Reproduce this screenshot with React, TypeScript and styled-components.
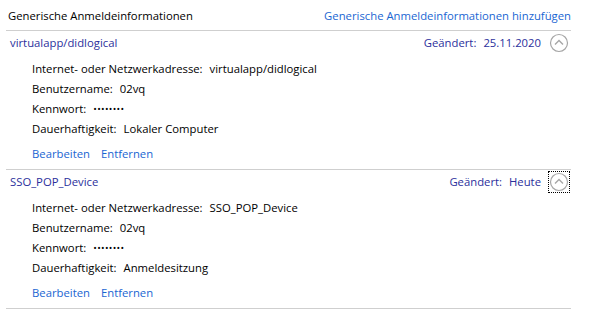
import React from "react";
import styled, { createGlobalStyle } from "styled-components";

const GlobalStyle = createGlobalStyle`
  body {
    margin: 0;
    background: #ffffff;
    font-family: "Open Sans", "Noto Sans", sans-serif;
    font-size: 11.3px;
    color: #000000;
  }
`;

type Credential = {
  name: string;
  changed: string;
  address: string;
  user: string;
  persistence: string;
  focused?: boolean;
};

const credentials: Credential[] = [
  {
    name: "virtualapp/didlogical",
    changed: "25.11.2020",
    address: "virtualapp/didlogical",
    user: "02vq",
    persistence: "Lokaler Computer",
  },
  {
    name: "SSO_POP_Device",
    changed: "Heute",
    address: "SSO_POP_Device",
    user: "02vq",
    persistence: "Anmeldesitzung",
    focused: true,
  },
];

const ChevronCircle: React.FC = () => (
  <svg width="20" height="20" viewBox="0 0 20 20">
    <circle cx="10" cy="10" r="8.5" fill="none" stroke="#a6a6a6" strokeWidth="1.2" />
    <path d="M6 11.5 L10 7.5 L14 11.5" fill="none" stroke="#a6a6a6" strokeWidth="1.4" />
  </svg>
);

const App: React.FC = () => {
  return (
    <>
      <GlobalStyle />
      <Panel>
        <Header>
          <HeaderTitle>Generische Anmeldeinformationen</HeaderTitle>
          <Link>Generische Anmeldeinformationen hinzufügen</Link>
        </Header>
        {credentials.map((c) => (
          <Entry key={c.name}>
            <TitleRow>
              <EntryName>{c.name}</EntryName>
              <Changed>
                <span>Geändert:</span>
                <span>{c.changed}</span>
                <Toggle $focused={c.focused}>
                  <ChevronCircle />
                </Toggle>
              </Changed>
            </TitleRow>
            <Details>
              <DetailRow>
                <span>Internet- oder Netzwerkadresse:</span>
                <span>{c.address}</span>
              </DetailRow>
              <DetailRow>
                <span>Benutzername:</span>
                <span>{c.user}</span>
              </DetailRow>
              <DetailRow>
                <span>Kennwort:</span>
                <Dots>••••••••</Dots>
              </DetailRow>
              <DetailRow>
                <span>Dauerhaftigkeit:</span>
                <span>{c.persistence}</span>
              </DetailRow>
            </Details>
            <Actions>
              <Link>Bearbeiten</Link>
              <Link>Entfernen</Link>
            </Actions>
          </Entry>
        ))}
      </Panel>
    </>
  );
};

const Panel = styled.div`
  width: 565px;
  margin-left: 6px;
`;

const Header = styled.div`
  display: flex;
  justify-content: space-between;
  align-items: center;
  height: 30px;
  padding: 3px 0 0 2px;
  margin-top: -3px;
  border-bottom: 1px solid #cfcfcf;
`;

const HeaderTitle = styled.span`
  color: #000000;
`;

const Link = styled.span`
  color: #1a66d2;
  cursor: pointer;
`;

const Entry = styled.div`
  border-bottom: 1px solid #cfcfcf;
  padding-bottom: 6px;
`;

const TitleRow = styled.div`
  display: flex;
  justify-content: space-between;
  align-items: center;
  height: 23px;
  padding: 0 2px 0 4px;
`;

const EntryName = styled.span`
  color: #2b2f9c;
`;

const Changed = styled.div`
  display: flex;
  align-items: center;
  gap: 7px;
  color: #2b2f9c;
`;

const Toggle = styled.div<{ $focused?: boolean }>`
  display: flex;
  align-items: center;
  justify-content: center;
  width: 20px;
  height: 20px;
  margin-left: 1px;
  outline: ${(p) => (p.$focused ? "1px dotted #000000" : "none")};
`;

const Details = styled.div`
  display: flex;
  flex-direction: column;
  margin-top: 4px;
  padding-left: 26px;
`;

const DetailRow = styled.div`
  display: flex;
  align-items: center;
  gap: 7px;
  height: 20px;
`;

const Dots = styled.span`
  font-size: 9.5px;
  letter-spacing: 0.3px;
`;

const Actions = styled.div`
  display: flex;
  align-items: center;
  gap: 11px;
  height: 20px;
  margin-top: 5px;
  padding-left: 26px;
`;

export default App;
